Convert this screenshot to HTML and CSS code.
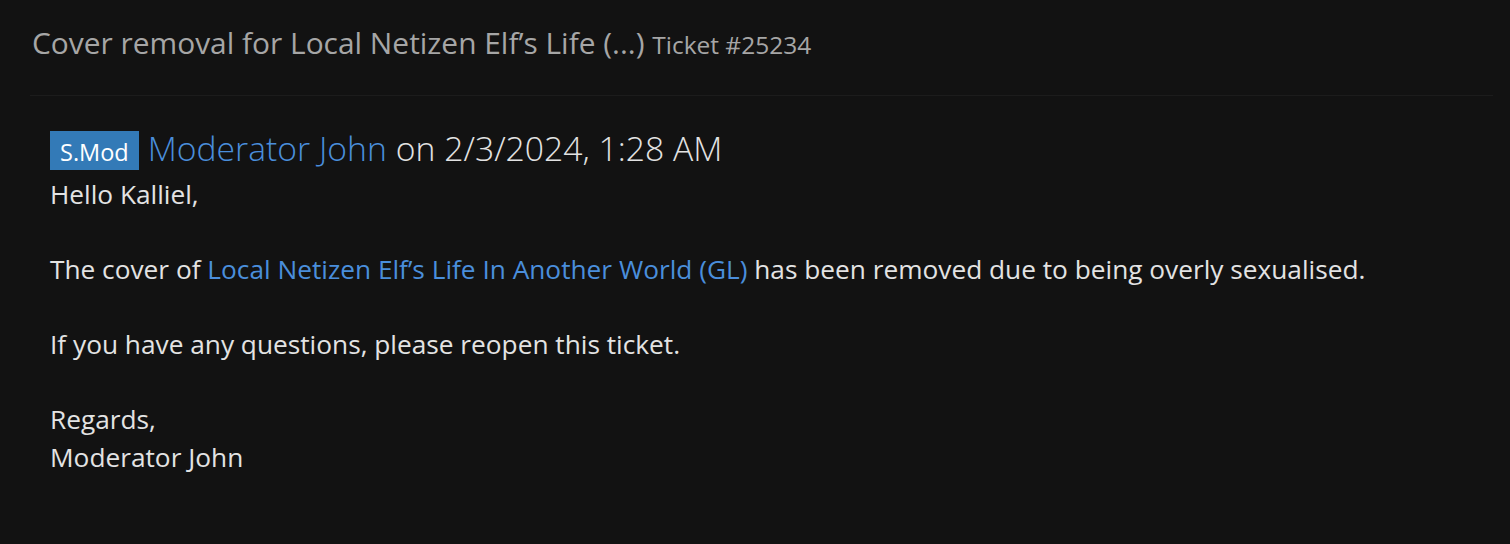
FILE: index.html
```html
<!DOCTYPE html>
<html>
<head>
<meta charset="utf-8">
<link rel="stylesheet" href="styles.css">
</head>
<body>
<div class="page">
  <h1 class="title">Cover removal for Local Netizen Elf’s Life (...) <small class="ticket">Ticket #25234</small></h1>
  <div class="post">
    <div class="post-head"><span class="badge">S.Mod</span><a class="user" href="#">Moderator John</a><span class="when">on 2/3/2024, 1:28 AM</span></div>
    <div class="post-body">
      Hello Kalliel,<br><br>
      The cover of <a class="link" href="#">Local Netizen Elf’s Life In Another World (GL)</a> has been removed due to being overly sexualised.<br><br>
      If you have any questions, please reopen this ticket.<br><br>
      Regards,<br>
      Moderator John
    </div>
  </div>
</div>
</body>
</html>
```

FILE: styles.css
```css
html, body {
  margin: 0;
  background: #121212;
  height: 100%;
}
body {
  font-family: "Open Sans", "Liberation Sans", sans-serif;
  color: #e3e3e3;
}
.page {
  padding: 20px 17px 0 30px;
}
.title {
  margin: 0;
  padding: 0 2px 28px;
  font-weight: 400;
  font-size: 29.9px;
  line-height: 45px;
  color: #a6a6a6;
  border-bottom: 1px solid #1c1c1c;
}
.ticket {
  font-size: 24.5px;
  color: #a6a6a6;
}
.post {
  padding: 35px 20px 0;
}
.post-head {
  display: flex;
  align-items: baseline;
  gap: 9px;
  font-size: 33.7px;
  font-weight: 300;
  line-height: 33px;
  color: #e3e3e3;
}
.badge {
  background: #337ab7;
  color: #fff;
  font-size: 23.5px;
  font-weight: 400;
  line-height: 36px;
  padding: 3px 10px 0;
}
.user, .link {
  color: #4a8edb;
  text-decoration: none;
}
.post-body {
  margin-top: 6px;
  font-size: 26.25px;
  line-height: 37.5px;
}
```
